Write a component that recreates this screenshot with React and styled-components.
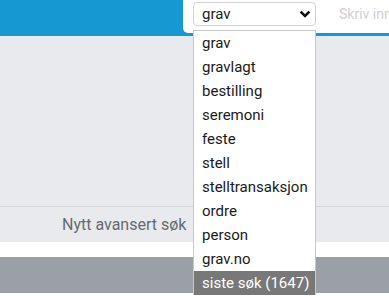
import React from 'react';
import styled, { createGlobalStyle } from 'styled-components';

const GlobalStyle = createGlobalStyle`
  html, body {
    margin: 0;
    padding: 0;
    background: #ffffff;
    font-family: Roboto, "Liberation Sans", Arial, sans-serif;
  }
  body {
    width: 389px;
    height: 296px;
    overflow: hidden;
  }
`;

const options = [
  'grav',
  'gravlagt',
  'bestilling',
  'seremoni',
  'feste',
  'stell',
  'stelltransaksjon',
  'ordre',
  'person',
  'grav.no',
  'siste søk (1647)',
];

const Page = styled.div`
  position: relative;
  width: 389px;
  height: 296px;
  overflow: hidden;
`;

const Header = styled.header`
  height: 36px;
  background: #1699d3;
  display: flex;
`;

const SearchPanel = styled.div`
  margin-left: 183px;
  flex: 1;
  height: 33px;
  background: #ffffff;
  border-bottom-left-radius: 5px;
  display: flex;
  align-items: flex-start;
  padding: 2px 0 0 10px;
  box-sizing: border-box;
  gap: 23px;
  overflow: hidden;
`;

const SelectBox = styled.div`
  width: 123px;
  height: 24px;
  flex-shrink: 0;
  box-sizing: border-box;
  border: 1px solid #d2d2d2;
  border-radius: 4px;
  display: flex;
  align-items: center;
  justify-content: space-between;
  padding: 0 4px 0 8px;
  font-size: 15px;
  color: #222;
`;

const Placeholder = styled.span`
  font-size: 14px;
  line-height: 24px;
  color: #d0d0d0;
  white-space: nowrap;
`;

const Content = styled.main`
  background: #e8eaee;
`;

const Filler = styled.div`
  height: 170px;
  border-bottom: 1px solid #d4d6da;
`;

const TabRow = styled.div`
  height: 35px;
  display: flex;
  align-items: center;
  padding-left: 62px;
`;

const TabLabel = styled.span`
  font-size: 16px;
  color: #666a70;
`;

const Gap = styled.div`
  height: 15px;
  background: #ffffff;
`;

const Footer = styled.div`
  height: 36px;
  background: #9aa0a6;
`;

const Dropdown = styled.ul`
  position: absolute;
  top: 30px;
  left: 193px;
  width: 123px;
  margin: 0;
  padding: 0;
  list-style: none;
  box-sizing: border-box;
  border: 1px solid #c8c8c8;
  border-bottom: none;
  background: #ffffff;
`;

const Option = styled.li`
  height: 24px;
  line-height: 24px;
  padding-left: 8px;
  font-size: 15px;
  white-space: nowrap;
  color: ${({ $active }) => ($active ? '#ffffff' : '#1a1a1a')};
  background: ${({ $active }) => ($active ? '#787878' : 'transparent')};
`;

const Chevron = () => (
  <svg width="12" height="8" viewBox="0 0 12 8">
    <path d="M1.6 1.6 L6 6 L10.4 1.6" fill="none" stroke="#111" strokeWidth="2.6" />
  </svg>
);

export default function App() {
  return (
    <Page>
      <GlobalStyle />
      <Header>
        <SearchPanel>
          <SelectBox>
            <span>grav</span>
            <Chevron />
          </SelectBox>
          <Placeholder>Skriv inn</Placeholder>
        </SearchPanel>
      </Header>
      <Content>
        <Filler />
        <TabRow>
          <TabLabel>Nytt avansert søk</TabLabel>
        </TabRow>
      </Content>
      <Gap />
      <Footer />
      <Dropdown>
        {options.map((o, i) => (
          <Option key={o} $active={i === options.length - 1}>
            {o}
          </Option>
        ))}
      </Dropdown>
    </Page>
  );
}
